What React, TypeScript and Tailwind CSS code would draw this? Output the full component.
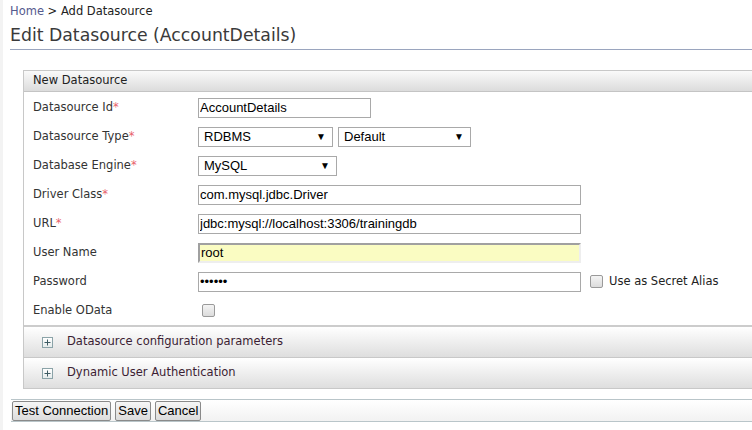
const labelFont = { fontFamily: '"DejaVu Sans", Verdana, sans-serif' };

const Req = () => <span className="text-[#e8626c]">*</span>;

const Row = ({ label, req, children }: { label: string; req?: boolean; children?: React.ReactNode }) => (
  <div className="flex items-center h-[29px]">
    <div className="w-[174px] pl-[9px] text-[11.5px] text-[#333]" style={labelFont}>
      {label}
      {req && <Req />}
    </div>
    <div className="flex items-center">{children}</div>
  </div>
);

const TextBox = ({ value, w, yellow, password }: { value: string; w: number; yellow?: boolean; password?: boolean }) => (
  <input
    readOnly
    type={password ? 'password' : 'text'}
    value={value}
    style={{ width: w, fontFamily: '"Liberation Sans", Arial, sans-serif' }}
    className={
      'h-[20px] px-[1px] text-[13px] text-black outline-none ' +
      (yellow
        ? 'bg-[#fafcc2] border-t-2 border-l-2 border-t-[#a0a0a0] border-l-[#a0a0a0] border-r-2 border-b-2 border-r-[#eeeeee] border-b-[#eeeeee]'
        : 'bg-white border border-[#a9a9a9]')
    }
  />
);

const Select = ({ value, w }: { value: string; w: number }) => (
  <div
    style={{ width: w, fontFamily: '"Liberation Sans", Arial, sans-serif' }}
    className="h-[20px] border border-[#a9a9a9] bg-white flex items-center justify-between pl-[5px] pr-[6px] text-[13px] text-black"
  >
    <span>{value}</span>
    <span className="text-[10px]">▼</span>
  </div>
);

const Check = () => (
  <div className="w-[13px] h-[13px] rounded-[2px] border border-[#9a9a9a] bg-gradient-to-b from-[#f4f4f4] to-[#dcdcdc]" />
);

const Plus = () => (
  <div className="w-[11px] h-[11px] border border-[#8ba3a8] bg-gradient-to-b from-white to-[#e6ecec] flex items-center justify-center">
    <svg width="7" height="7" viewBox="0 0 7 7">
      <path d="M3.5 0.5v6M0.5 3.5h6" stroke="#3d5b63" strokeWidth="1" />
    </svg>
  </div>
);

const AccRow = ({ title }: { title: string }) => (
  <div className="h-[31px] flex items-center border-b border-[#c8c8c8] bg-gradient-to-b from-white to-[#dedede]">
    <div className="pl-[18px] pr-[14px]">
      <Plus />
    </div>
    <span className="text-[11.5px] text-[#3b1d33]" style={labelFont}>
      {title}
    </span>
  </div>
);

const Btn = ({ children }: { children: React.ReactNode }) => (
  <button
    className="h-[20px] px-[2px] border border-[#8a8a8a] rounded-[2px] bg-gradient-to-b from-[#f6f6f6] to-[#dcdcdc] text-[13px] text-black leading-none"
    style={{ fontFamily: '"Liberation Sans", Arial, sans-serif' }}
  >
    {children}
  </button>
);

export default function App() {
  return (
    <div className="w-[752px] h-[430px] overflow-hidden bg-white border-l-[3px] border-[#f3f3f3]">
      <div className="pl-[7px] pt-[3px]">
        <div className="text-[11.5px] leading-[16px] text-[#222]" style={labelFont}>
          <span className="text-[#555a8e]">Home</span> &gt; Add Datasource
        </div>
        <div
          className="mt-[4px] text-[17.3px] leading-[24px] text-[#3a3a3a] pb-[2px] border-b border-[#9aa5be]"
          style={labelFont}
        >
          Edit Datasource (AccountDetails)
        </div>
      </div>

      <div className="ml-[20px] mt-[20px] border-l border-t border-[#c8c8c8]">
        <div className="h-[21px] flex items-center pl-[9px] border-b border-[#c4c4c4] bg-gradient-to-b from-[#fafafa] to-[#dcdcdc] text-[11.5px] text-[#222]" style={labelFont}>
          New Datasource
        </div>
        <div className="pt-[1px] border-b-2 border-[#cccccc]">
          <Row label="Datasource Id" req>
            <TextBox value="AccountDetails" w={173} />
          </Row>
          <Row label="Datasource Type" req>
            <Select value="RDBMS" w={135} />
            <div className="w-[5px]" />
            <Select value="Default" w={133} />
          </Row>
          <Row label="Database Engine" req>
            <Select value="MySQL" w={139} />
          </Row>
          <Row label="Driver Class" req>
            <TextBox value="com.mysql.jdbc.Driver" w={383} />
          </Row>
          <Row label="URL" req>
            <TextBox value="jdbc:mysql://localhost:3306/trainingdb" w={383} />
          </Row>
          <Row label="User Name">
            <TextBox value="root" w={383} yellow />
          </Row>
          <Row label="Password">
            <TextBox value="123456" w={383} password />
            <div className="ml-[9px] mr-[6px]">
              <Check />
            </div>
            <span className="text-[11.5px] text-[#222]" style={labelFont}>
              Use as Secret Alias
            </span>
          </Row>
          <Row label="Enable OData">
            <div className="pl-[4px]">
              <Check />
            </div>
          </Row>
        </div>
        <AccRow title="Datasource configuration parameters" />
        <AccRow title="Dynamic User Authentication" />
      </div>

      <div className="ml-[8px] mt-[10px] h-[23px] flex items-center gap-[4px] pl-[1px] border-t border-b border-[#b9c5c9] bg-gradient-to-b from-white to-[#f2f2f2]">
        <Btn>Test Connection</Btn>
        <Btn>Save</Btn>
        <Btn>Cancel</Btn>
      </div>
    </div>
  );
}
